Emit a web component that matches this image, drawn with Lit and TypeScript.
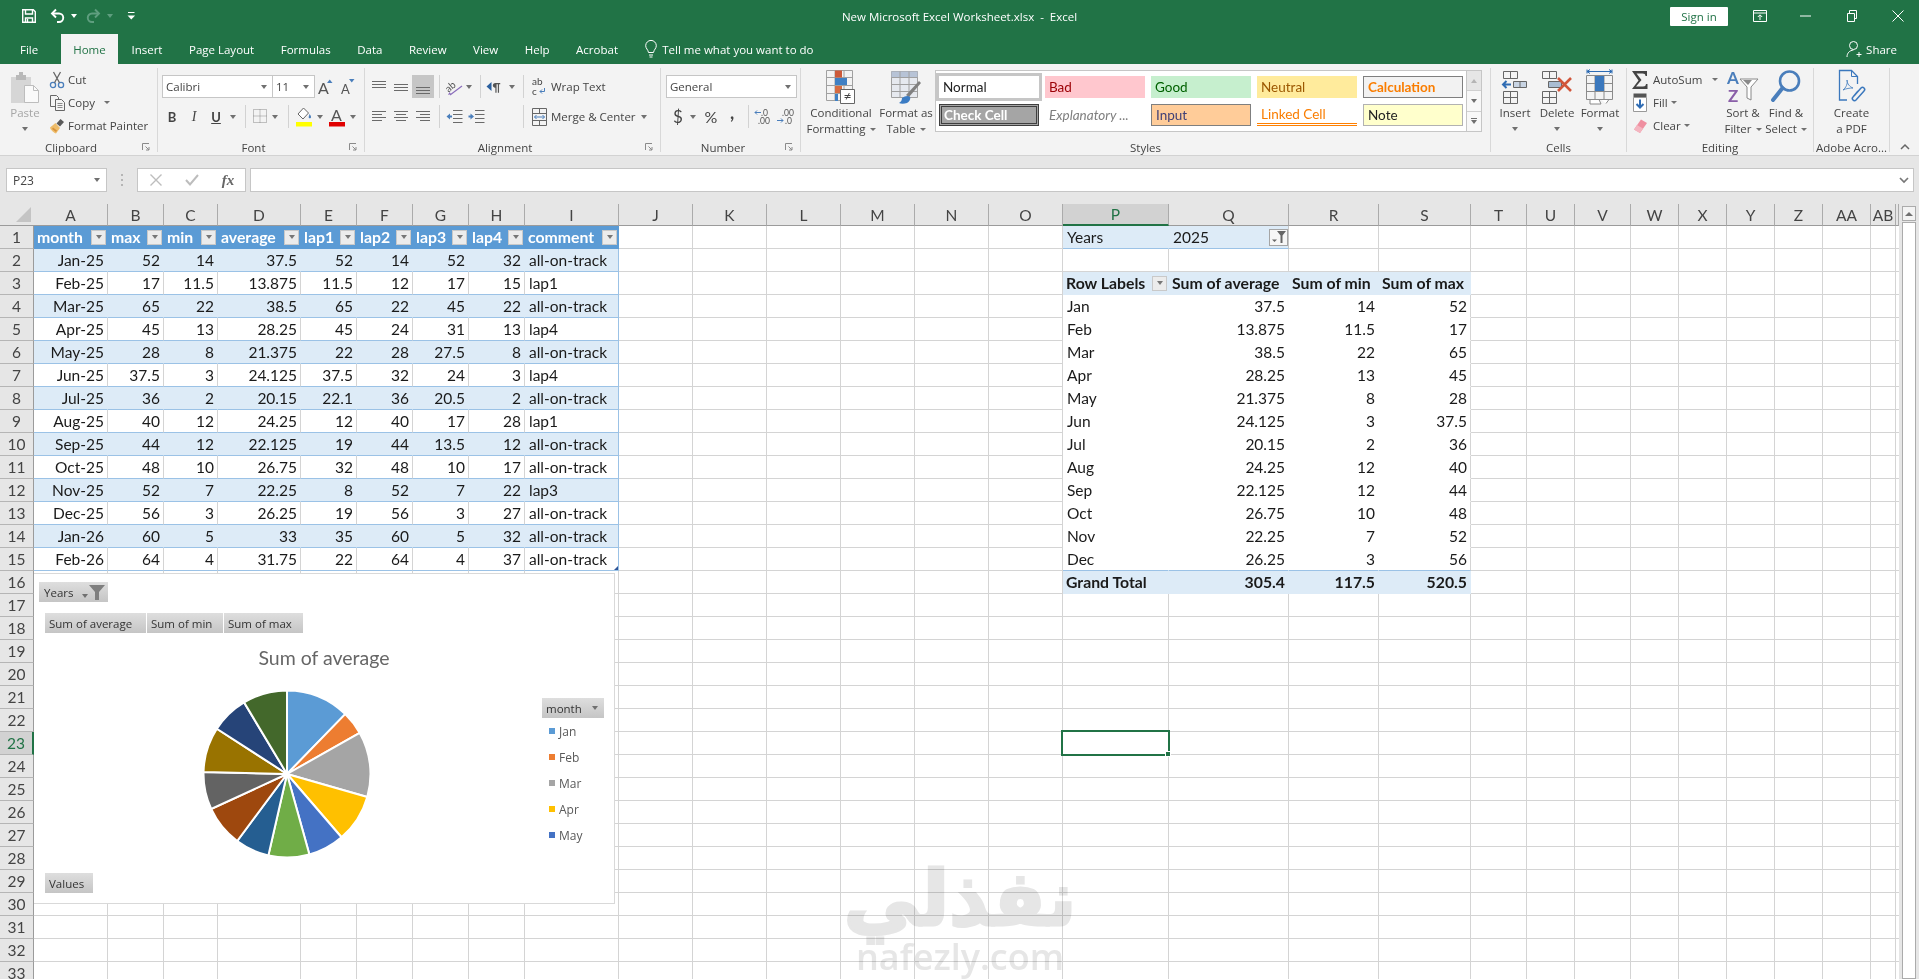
import { LitElement, html, css, svg } from 'lit';
import { customElement } from 'lit/decorators.js';

// column right edges in page pixels, the last one is the sliver after AB
const EDGES = [34, 108, 164, 218, 301, 357, 413, 469, 525, 619, 693, 767, 841, 915, 989, 1063, 1169, 1289, 1379, 1471, 1527, 1575, 1631, 1679, 1727, 1775, 1823, 1871, 1896, 1899];
const COLS = ['A', 'B', 'C', 'D', 'E', 'F', 'G', 'H', 'I', 'J', 'K', 'L', 'M', 'N', 'O', 'P', 'Q', 'R', 'S', 'T', 'U', 'V', 'W', 'X', 'Y', 'Z', 'AA', 'AB', ''];
const ROW_COUNT = 33;

const TABLE_HEAD = ['month', 'max', 'min', 'average', 'lap1', 'lap2', 'lap3', 'lap4', 'comment'];
const TABLE_ROWS = [
  ['Jan-25', '52', '14', '37.5', '52', '14', '52', '32', 'all-on-track'],
  ['Feb-25', '17', '11.5', '13.875', '11.5', '12', '17', '15', 'lap1'],
  ['Mar-25', '65', '22', '38.5', '65', '22', '45', '22', 'all-on-track'],
  ['Apr-25', '45', '13', '28.25', '45', '24', '31', '13', 'lap4'],
  ['May-25', '28', '8', '21.375', '22', '28', '27.5', '8', 'all-on-track'],
  ['Jun-25', '37.5', '3', '24.125', '37.5', '32', '24', '3', 'lap4'],
  ['Jul-25', '36', '2', '20.15', '22.1', '36', '20.5', '2', 'all-on-track'],
  ['Aug-25', '40', '12', '24.25', '12', '40', '17', '28', 'lap1'],
  ['Sep-25', '44', '12', '22.125', '19', '44', '13.5', '12', 'all-on-track'],
  ['Oct-25', '48', '10', '26.75', '32', '48', '10', '17', 'all-on-track'],
  ['Nov-25', '52', '7', '22.25', '8', '52', '7', '22', 'lap3'],
  ['Dec-25', '56', '3', '26.25', '19', '56', '3', '27', 'all-on-track'],
  ['Jan-26', '60', '5', '33', '35', '60', '5', '32', 'all-on-track'],
  ['Feb-26', '64', '4', '31.75', '22', '64', '4', '37', 'all-on-track'],
];
const PIVOT_ROWS = [
  ['Jan', '37.5', '14', '52'],
  ['Feb', '13.875', '11.5', '17'],
  ['Mar', '38.5', '22', '65'],
  ['Apr', '28.25', '13', '45'],
  ['May', '21.375', '8', '28'],
  ['Jun', '24.125', '3', '37.5'],
  ['Jul', '20.15', '2', '36'],
  ['Aug', '24.25', '12', '40'],
  ['Sep', '22.125', '12', '44'],
  ['Oct', '26.75', '10', '48'],
  ['Nov', '22.25', '7', '52'],
  ['Dec', '26.25', '3', '56'],
];
const PIE_COLORS = ['#5b9bd5', '#ed7d31', '#a5a5a5', '#ffc000', '#4472c4', '#70ad47', '#255e91', '#9e480e', '#636363', '#997300', '#264478', '#43682b'];

type Cell = { text?: string; cls: string; filter?: boolean; pivotFilter?: boolean };

function buildCells() {
  const cells = new Map<string, Cell>();
  TABLE_HEAD.forEach((text, c) => cells.set(`${c}:1`, { text, cls: 'th', filter: true }));
  TABLE_ROWS.forEach((row, r) => {
    row.forEach((text, c) => {
      const band = r % 2 === 0 ? 'band' : 'plain';
      const align = c === 8 ? '' : 'num';
      const last = c === 8 ? 'tbl-end' : '';
      const corner = c === 8 && r === TABLE_ROWS.length - 1 ? 'tbl-corner' : '';
      cells.set(`${c}:${r + 2}`, { text, cls: `tb ${band} ${align} ${last} ${corner}` });
    });
  });
  const P = 15;
  cells.set(`${P}:1`, { text: 'Years', cls: 'pv-page' });
  cells.set(`${P + 1}:1`, { text: '2025', cls: 'pv-page pv-page-val', pivotFilter: true });
  ['Row Labels', 'Sum of average', 'Sum of min', 'Sum of max'].forEach((text, i) => {
    cells.set(`${P + i}:3`, { text, cls: 'pv-head', filter: i === 0 });
  });
  PIVOT_ROWS.forEach((row, r) => {
    row.forEach((text, i) => {
      const lastRow = r === PIVOT_ROWS.length - 1 ? 'pv-lastrow' : '';
      cells.set(`${P + i}:${r + 4}`, { text, cls: `pv-body ${i ? 'num' : ''} ${i === 3 ? 'pv-end' : ''} ${lastRow}` });
    });
  });
  ['Grand Total', '305.4', '117.5', '520.5'].forEach((text, i) => {
    cells.set(`${P + i}:16`, { text, cls: `pv-head ${i ? 'num' : ''}` });
  });
  return cells;
}

function piePaths(cx: number, cy: number, r: number) {
  const values = PIVOT_ROWS.map((row) => Number(row[1]));
  const total = values.reduce((a, b) => a + b, 0);
  let angle = -Math.PI / 2;
  return values.map((v, i) => {
    const next = angle + (v / total) * Math.PI * 2;
    const x0 = cx + r * Math.cos(angle);
    const y0 = cy + r * Math.sin(angle);
    const x1 = cx + r * Math.cos(next);
    const y1 = cy + r * Math.sin(next);
    const large = next - angle > Math.PI ? 1 : 0;
    angle = next;
    return { d: `M${cx} ${cy}L${x0.toFixed(2)} ${y0.toFixed(2)}A${r} ${r} 0 ${large} 1 ${x1.toFixed(2)} ${y1.toFixed(2)}Z`, fill: PIE_COLORS[i] };
  });
}

const GREY = '#6a6a6a';
const BLUE = '#4a7ebb';

// horizontal text lines, used by the alignment buttons
function lines(rows: [number, number, number][], color = GREY) {
  return html`<svg width="16" height="18" viewBox="0 0 16 18">
    ${rows.map(([y, a, b]) => svg`<path d="M${a} ${y + 0.5}H${b}" stroke=${color} fill="none" />`)}
  </svg>`;
}

const ICONS = {
  save: html`<svg width="16" height="16" viewBox="0 0 16 16" fill="none" stroke="#fff" stroke-width="1.4"><path d="M1.7 1.7h10.6l2 2v10.6H1.7z" /><path d="M4.5 2v4h7V2" /><path d="M4.5 14.2V10h7v4.2" /><path d="M6.5 11v3" /></svg>`,
  undo: html`<svg width="16" height="16" viewBox="0 0 16 16" fill="none" stroke="#fff" stroke-width="1.9"><path d="M6 1.5 2 5.5l4 4" /><path d="M2.5 5.5H9a4 4 0 0 1 0 8.5H7" /></svg>`,
  redo: html`<svg width="16" height="16" viewBox="0 0 16 16" fill="none" stroke="#5f9e7f" stroke-width="1.9"><path d="m10 1.5 4 4-4 4" /><path d="M13.5 5.5H7a4 4 0 0 0 0 8.5h2" /></svg>`,
  custom: html`<svg width="9" height="10" viewBox="0 0 9 10"><path d="M1 1.5h6.5" stroke="#fff" /><path d="M.5 4.5h7.6L4.3 8.5z" fill="#fff" /></svg>`,
  signWin: html`<svg width="14" height="12" viewBox="0 0 14 12" fill="none" stroke="#fff"><path d="M.5.5h13v11H.5zM.5 3h13" /><path d="M7 10V5M4.8 7 7 4.8 9.2 7" /></svg>`,
  minimize: html`<svg width="12" height="2" viewBox="0 0 12 2"><path d="M0 1h11" stroke="#fff" /></svg>`,
  restore: html`<svg width="12" height="12" viewBox="0 0 12 12" fill="none" stroke="#fff"><path d="M1.5 3.5h7v8h-7zM3.5 3.5v-3h7v8h-2" /></svg>`,
  close: html`<svg width="12" height="12" viewBox="0 0 12 12" stroke="#fff"><path d="m.5.5 11 11M11.5.5l-11 11" /></svg>`,
  share: html`<svg width="16" height="18" viewBox="0 0 16 18" fill="none" stroke="#fff"><circle cx="7.5" cy="5.5" r="4" /><path d="M1 17c0-4 2.5-6.5 6.5-7" /><path d="M10.5 14.5h5M13 12v5" /></svg>`,
  bulb: html`<svg width="12" height="18" viewBox="0 0 12 18" fill="none" stroke="#fff"><path d="M3.5 12.5C3 9.5.7 8.5.7 5.7a5.3 5.3 0 0 1 10.6 0c0 2.8-2.3 3.8-2.8 6.8z" /><path d="M4 15h4M4.5 17h3" /></svg>`,

  paste: html`<svg width="30" height="32" viewBox="0 0 30 32"><path d="M1 6h20v26H1z" fill="#d6d6d6" /><path d="M6 4h10v5H6z" fill="#b9b9b9" /><path d="M9 1h4v4H9z" fill="#b9b9b9" /><path d="M14.5 14.5h9l5 5v12h-14z" fill="#fafafa" stroke="#bdbdbd" /><path d="M23.5 14.5v5h5" fill="none" stroke="#bdbdbd" /></svg>`,
  cut: html`<svg width="16" height="18" viewBox="0 0 16 18" fill="none"><circle cx="4" cy="14" r="2.6" stroke=${BLUE} stroke-width="1.3" /><circle cx="12" cy="14" r="2.6" stroke=${BLUE} stroke-width="1.3" /><path d="m5.5 11.8 6-10.8M10.5 11.8l-6-10.8" stroke="#666" stroke-width="1.3" /></svg>`,
  copy: html`<svg width="15" height="16" viewBox="0 0 15 16" fill="none" stroke="#666"><path d="M.5.5h6l2 2v9h-8z" /><path d="M5.5 4.5h6l3 3v8h-9z" fill="#f3f3f3" /><path d="M7.5 8.5h5M7.5 10.5h5M7.5 12.5h5" stroke="#8a8a8a" /></svg>`,
  painter: html`<svg width="16" height="16" viewBox="0 0 16 16"><path d="M1 9.5 6.5 5l4.5 5-4 5.5C5 15 1.5 12 1 9.5z" fill="#eebd6b" /><path d="m3 11 4 3 1-1.5-4-3z" fill="#d8923b" /><path d="m7.5 5.5 4-4.5 3.5 3-4 4.5z" fill="#5a5a5a" /></svg>`,
  grow: html`<svg width="16" height="18" viewBox="0 0 16 18"><text x="0" y="16" font-family="Lato" font-size="16" fill="#555">A</text><path d="M9 5h5.5l-2.75-3.5z" fill=${BLUE} /></svg>`,
  shrink: html`<svg width="16" height="18" viewBox="0 0 16 18"><text x="1" y="16" font-family="Lato" font-size="13" fill="#555">A</text><path d="M9 1h5.5l-2.75 3.5z" fill=${BLUE} /></svg>`,
  borders: html`<svg width="15" height="15" viewBox="0 0 15 15" stroke="#8a8a8a" stroke-dasharray="1 1" fill="none"><path d="M.5.5h13v13H.5zM7 .5v13M.5 7h13" /></svg>`,
  fill: html`<svg width="17" height="20" viewBox="0 0 17 20"><path d="M7.5 1 2 7l5 5 5.5-6z" fill="#fff" stroke="#666" /><path d="M13.5 7c1.5 2 2 3 1.2 4-1 .8-2.2 0-2-1z" fill=${BLUE} /><path d="M0 15h16v4.5H0z" fill="#ffff00" /></svg>`,
  fontColor: html`<svg width="17" height="20" viewBox="0 0 17 20"><text x="2" y="14" font-family="Lato" font-size="16" fill="#555">A</text><path d="M0 15h16v4.5H0z" fill="#e00000" /></svg>`,
  orient: html`<svg width="18" height="18" viewBox="0 0 18 18"><text x="1" y="12" transform="rotate(-40 6 10)" font-family="Lato" font-size="10" fill="#555">ab</text><path d="m5 17 12-9" stroke="#8a6dbb" stroke-width="1.2" /><path d="m3 17 3-1-1.5-2z" fill="#8a6dbb" /></svg>`,
  rtl: html`<svg width="18" height="14" viewBox="0 0 18 14"><path d="M5.5 2v9L.5 6.5z" fill="#2a5f9e" /><text x="6.5" y="11" font-family="Lato" font-weight="700" font-size="11" fill="#555">¶</text></svg>`,
  wrap: html`<svg width="14" height="20" viewBox="0 0 14 20"><text x="0" y="8" font-family="Lato" font-size="10" fill="#444">ab</text><text x="0" y="18" font-family="Lato" font-size="10" fill="#444">c</text><path d="M12.5 11v3.5H8M10 12.5l-2 2 2 2" stroke=${BLUE} fill="none" /></svg>`,
  merge: html`<svg width="15" height="18" viewBox="0 0 15 18" fill="none" stroke="#666"><path d="M.5.5h14v17H.5zM.5 5.5h14M.5 12.5h14M7.5.5v5M7.5 12.5v5" /><path d="M2.5 9h10M4.5 7l-2 2 2 2M10.5 7l2 2-2 2" stroke=${BLUE} /></svg>`,
  indentL: html`<svg width="17" height="16" viewBox="0 0 17 16"><path d="M7 1.5h9.5M7 5.5h9.5M7 9.5h9.5M7 13.5h9.5" stroke=${GREY} /><path d="M.5 7.5 4 4.5v2h2v2H4v2z" fill=${BLUE} /></svg>`,
  indentR: html`<svg width="17" height="16" viewBox="0 0 17 16"><path d="M7 1.5h9.5M7 5.5h9.5M7 9.5h9.5M7 13.5h9.5" stroke=${GREY} /><path d="M6 7.5 2.5 4.5v2H.5v2h2v2z" fill=${BLUE} /></svg>`,
  decUp: html`<svg width="18" height="17" viewBox="0 0 18 17"><text x="7" y="7.5" font-family="Lato" font-size="8.5" fill="#555">.0</text><text x="4" y="16" font-family="Lato" font-size="8.5" fill="#555">.00</text><path d="M1 4.5h6M3 2.5l-2 2 2 2" stroke=${BLUE} fill="none" /></svg>`,
  decDown: html`<svg width="18" height="17" viewBox="0 0 18 17"><text x="5" y="7.5" font-family="Lato" font-size="8.5" fill="#555">.00</text><text x="8" y="16" font-family="Lato" font-size="8.5" fill="#555">.0</text><path d="M0 12.5h6M4 10.5l2 2-2 2" stroke=${BLUE} fill="none" /></svg>`,

  condFormat: html`<svg width="30" height="34" viewBox="0 0 30 34" fill="none"><path d="M.5.5h26v30H.5zM.5 7.5h26M.5 15.5h26M.5 23.5h26M9 .5v30M18 .5v30" stroke="#a0a0a0" /><path d="M9 .5h7v7H9z" fill="#cc5a3a" /><path d="M9 8h12v7H9z" fill="#3f80c4" /><path d="M9 16h7v7H9z" fill="#d66b41" /><path d="M9 24h3v7H9z" fill="#3f80c4" /><path d="M14.5 19.5h14v14h-14z" fill="#fff" stroke="#666" /><text x="21.5" y="31" text-anchor="middle" font-family="Lato" font-size="14" fill="#444">≠</text></svg>`,
  fmtTable: html`<svg width="30" height="34" viewBox="0 0 30 34"><path d="M.5 1.5h26v26H.5z" fill="#e6e9ef" stroke="#a0a0a0" /><path d="M.5 1.5h26v6H.5z" fill="#b7c3d6" /><path d="M.5 7.5h26M.5 14.5h26M.5 21.5h26M9 1.5v26M18 1.5v26" stroke="#a0a0a0" fill="none" /><path d="m15 25 13-14 2 2-12 14z" fill="#808080" /><path d="M11 28c3-2 6-3 8-1 1 2-1 5-3 6-3 1-6 1-8 0 2-1 3-3 3-5z" fill="#3b7cc4" /></svg>`,
  insert: html`<svg width="28" height="34" viewBox="0 0 28 34" fill="none" stroke="#666"><path d="M2.5 1.5h14v7h-14zM9.5 1.5v7M2.5 21.5h14v12h-14zM2.5 27.5h14M9.5 21.5v12" /><path d="M12.5 11.5h13v6h-13z" fill="#c8d4e3" /><path d="M19 11.5v6" /><path d="M10 14.5H2M5.5 11 2 14.5 5.5 18" stroke="#2f6cb3" stroke-width="2" /></svg>`,
  del: html`<svg width="32" height="34" viewBox="0 0 32 34" fill="none" stroke="#666"><path d="M1.5 1.5h14v7h-14zM8.5 1.5v7M1.5 21.5h14v12h-14zM1.5 27.5h14M8.5 21.5v12" /><path d="M7.5 11.5h13v6h-13z" fill="#a9bdd3" /><path d="m17 8 13 13M30 8 17 21" stroke="#d1553a" stroke-width="2.6" /></svg>`,
  format: html`<svg width="30" height="36" viewBox="0 0 30 36" fill="none" stroke="#8a8a8a"><path d="M1.5 6.5h26v24h-26zM1.5 14.5h26M1.5 22.5h26M10 6.5v24M19 6.5v24" /><path d="M10 7h9v15h-9z" fill="#3b78bd" stroke="none" /><path d="M2 2.5h25M2 .5v4M27 .5v4M5 .5 2 2.5 5 4.5M24 .5l3 2-3 2" stroke="#2f6cb3" /><path d="M5 30.5h9l2 4.5H5zM16 30.5h8l-3 4" fill="#fff" /></svg>`,
  sigma: html`<svg width="16" height="18" viewBox="0 0 16 18"><path d="M0 0h15v5h-1.5c-.2-1.8-1-2.5-3-2.5H4.5l5 6.500-5.500 6.500h7c2 0 2.800-.8 3-2.500h1.500v5H0l6.500-8.500z" fill="#444" /></svg>`,
  fillDown: html`<svg width="14" height="19" viewBox="0 0 14 19"><path d="M.5.5h13v4H.5z" fill="#555" /><path d="M.5 4.5h13v14H.5z" fill="#fff" stroke="#999" /><path d="M7 6.5v8M3.5 11 7 14.5l3.5-3.5" stroke="#2f6cb3" stroke-width="2" fill="none" /></svg>`,
  eraser: html`<svg width="15" height="16" viewBox="0 0 15 16"><path d="m8 1.5 6 3.5-7 10-6-3.5z" fill="#ef8fa0" /><path d="M1 11.5 4 7l6 3.5L7 15z" fill="#f4b5c0" /></svg>`,
  sort: html`<svg width="32" height="34" viewBox="0 0 32 34"><text x="0" y="14" font-family="Lato" font-weight="700" font-size="17" fill="#4a7ebb">A</text><text x="1" y="32" font-family="Lato" font-weight="700" font-size="17" fill="#8a5fa8">Z</text><path d="M13 9h18l-7 8v13l-4-2V17z" fill="#fff" stroke="#888" /><path d="M16 10h9l-4 5z" fill="#8a8a8a" /></svg>`,
  find: html`<svg width="30" height="34" viewBox="0 0 30 34" fill="none"><circle cx="18.5" cy="11" r="9.5" stroke=${BLUE} stroke-width="2.6" /><path d="M11.5 18 2 30" stroke=${BLUE} stroke-width="4" stroke-linecap="round" /></svg>`,
  pdf: html`<svg width="28" height="36" viewBox="0 0 28 36" fill="none" stroke="#3b78bd"><path d="M9 31H1.5V1.5h12l6 6V15" stroke-width="1.3" /><path d="M13.5 1.5v6h6" /><path d="M5 21c3-2 5-7 4-10 0 4 3 7 6 8-3 0-7 .5-10 2z" stroke-width=".8" /><path d="m16 27 7-8c2-2 5 1 3 3l-8 9c-2 2-5-1-3-3l5-6" stroke-width="1.5" /></svg>`,
  launcher: html`<svg width="8" height="8" viewBox="0 0 8 8" fill="none" stroke="#8a8a8a"><path d="M.5 7V.5H7" /><path d="M3.5 3.5 7 7M7 4v3H4" /></svg>`,
  chevUp: html`<svg width="10" height="7" viewBox="0 0 10 7" fill="none" stroke="#666" stroke-width="1.5"><path d="m1 6 4-4 4 4" /></svg>`,
  chevDown: html`<svg width="10" height="7" viewBox="0 0 10 7" fill="none" stroke="#777" stroke-width="1.7"><path d="m1 1 4 4 4-4" /></svg>`,
  cross: html`<svg width="12" height="12" viewBox="0 0 12 12" stroke="#bdbdbd" stroke-width="1.4"><path d="m.5.5 11 11M11.5.5l-11 11" /></svg>`,
  check: html`<svg width="14" height="12" viewBox="0 0 14 12" fill="none" stroke="#bdbdbd" stroke-width="2"><path d="m1 6 4 4.5L13 1" /></svg>`,
  funnel: html`<svg width="16" height="15" viewBox="0 0 16 15"><path d="M0 0h16l-6 7v8H6V7z" fill="#7f7f7f" /></svg>`,
  funnelSmall: html`<svg width="16" height="14" viewBox="0 0 16 14"><path d="M6 1h9L11.5 5.5V13h-2V5.5z" fill="#666" /><path d="M1 9.5h5l-2.5 2.500z" fill="#666" /></svg>`,
};

const caret = html`<i class="caret"></i>`;
const vsep = html`<i class="vsep"></i>`;

function bigButton(icon: unknown, line1: string, line2: string, width: string) {
  return html`<div class="big ${width}">
    <div class="big-icon">${icon}</div>
    <div class="big-text">${line1}</div>
    <div class="big-text">${line2}<i class="caret caret-sm"></i></div>
  </div>`;
}

@customElement('app-root')
export class AppRoot extends LitElement {
  static styles = css`
    :host {
      display: block;
      width: 1919px;
      height: 979px;
      overflow: hidden;
      background: #e6e6e6;
      font-family: 'Open Sans', 'Noto Sans', sans-serif;
      font-size: 11.5px;
      color: #444;
    }
    i { display: block; font-style: normal; }
    svg { overflow: visible; display: block; }
    .caret {
      width: 0;
      height: 0;
      border-left: 3.5px solid transparent;
      border-right: 3.5px solid transparent;
      border-top: 4px solid #707070;
    }
    .caret-sm { display: inline-block; margin-left: 4px; border-left-width: 3px; border-right-width: 3px; border-top-width: 3px; }
    .vsep { width: 1px; height: 23px; background: #d2d2d2; flex: none; }

    /* title bar and tabs */
    .title { height: 34px; box-sizing: border-box; padding-bottom: 2px; background: #217346; color: #fff; display: grid; grid-template-columns: 1fr auto 1fr; align-items: center; }
    .qat { display: flex; align-items: center; padding-left: 21px; }
    .qat .undo { margin-left: 13px; }
    .qat .c1 { margin: 0 0 0 5px; border-top-color: #fff; }
    .qat .redo { margin-left: 8px; }
    .qat .c2 { margin: 0 0 0 6px; border-top-color: #5f9e7f; }
    .qat .cust { margin-left: 14px; }
    .doc-name { text-align: center; font-size: 11.5px; }
    .win { display: flex; align-items: center; justify-content: flex-end; }
    .signin { width: 58px; height: 19px; background: #fff; color: #217346; display: flex; align-items: center; justify-content: center; border-radius: 1px; font-size: 11.5px; margin-right: 9px; }
    .win-btn { width: 46px; display: flex; justify-content: center; }
    .win .win-btn:last-child { margin-right: -2px; }

    .tabs { height: 30px; background: #217346; color: #fff; display: flex; align-items: stretch; padding-left: 20px; font-size: 11.5px; }
    .tab { padding: 0 13.25px; display: flex; align-items: center; }
    .tab.file { padding: 0 23px 0 0; }
    .tab.on { background: #f3f3f3; color: #217346; padding: 0 12px; margin-right: 0.5px; }
    .tell { display: flex; align-items: center; gap: 5px; margin-left: 14px; }
    .share { margin-left: auto; display: flex; align-items: center; gap: 4px; padding-right: 22px; }

    /* ribbon */
    .ribbon { height: 92px; box-sizing: border-box; background: #f3f3f3; border-bottom: 1px solid #d2d2d2; padding-top: 4px; display: flex; color: #444; }
    .group { height: 84px; box-sizing: border-box; border-right: 1px solid #d8d8d8; display: flex; flex-direction: column; flex: none; }
    .body { flex: 1; min-height: 0; display: flex; }
    .label { height: 16px; margin-bottom: -3px; margin-top: -5px; display: flex; align-items: center; flex: none; }
    .label span { flex: 1; text-align: center; }
    .label .launch { width: 15px; flex: none; }
    .g-clip { width: 158px; }
    .g-font { width: 207px; }
    .g-align { width: 296px; }
    .g-num { width: 140px; }
    .g-styles { width: 690px; }
    .g-cells { width: 136px; }
    .g-edit { width: 187px; }
    .g-pdf { width: 76px; }
    .g-collapse { flex: 1; display: flex; align-items: flex-end; justify-content: center; padding-bottom: 2px; box-sizing: border-box; height: 84px; }

    .stack { display: flex; flex-direction: column; }
    .two { padding-top: 7px; gap: 7px; }
    .line { display: flex; align-items: center; height: 23px; }
    .s { display: flex; align-items: center; justify-content: center; height: 23px; flex: none; }
    .w3 { width: 3px; } .w4 { width: 4px; } .w5 { width: 5px; } .w6 { width: 6px; } .w7 { width: 7px; } .w8 { width: 8px; } .w9 { width: 9px; } .w12 { width: 12px; }
    .w14 { width: 14px; } .w16 { width: 16px; } .w20 { width: 20px; } .w22 { width: 22px; } .w23 { width: 23px; } .w36 { width: 36px; }
    .hl { background: #c6c6c6; }

    .big { display: flex; flex-direction: column; align-items: center; flex: none; }
    .big-icon { height: 37px; display: flex; align-items: center; justify-content: center; }
    .big-text { height: 16px; line-height: 16px; white-space: nowrap; display: flex; align-items: center; justify-content: center; }
    .bw42 { width: 42px; } .bw44 { width: 44px; } .bw50 { width: 50px; } .bw80 { width: 80px; } .bw75 { width: 75px; }
    .dim { color: #a6a6a6; }
    .dim .caret { margin: 0; }

    .small-rows { display: flex; flex-direction: column; }
    .small-row { height: 23px; display: flex; align-items: center; white-space: nowrap; }
    .small-row .ico { width: 18px; display: flex; justify-content: center; flex: none; margin-left: -2px; margin-right: 2px; }
    .small-row .caret { margin-left: 9px; border-left-width: 3px; border-right-width: 3px; border-top-width: 3px; }
    .edit-col { width: 95px; }
    .edit-col .ico { margin-left: 4px; margin-right: 4px; }
    .edit-col .small-row .caret { margin-left: 3px; }
    .edit-col .small-row .caret.far { margin-left: 10px; }

    .box { height: 23px; box-sizing: border-box; background: #fff; border: 1px solid #c6c6c6; display: flex; align-items: center; justify-content: space-between; padding: 0 5px 0 3px; flex: none; }
    .font-name { width: 111px; margin-left: 4px; }
    .font-size { width: 43px; margin-left: -1px; }
    .num-fmt { width: 131px; margin-left: 5px; }
    .bi { font-family: Lato, sans-serif; font-size: 13px; font-weight: 700; }
    .bi.it { font-style: italic; font-weight: 400; font-family: 'Liberation Serif', serif; font-size: 14px; }
    .bi.un { text-decoration: underline; }
    .dollar { font-size: 17px; font-family: Lato, sans-serif; }
    .percent { font-size: 16px; font-family: Lato, sans-serif; }
    .comma { font-size: 18px; font-weight: 700; font-family: Lato, sans-serif; padding-bottom: 9px; box-sizing: border-box; }
    .text-after { margin-left: 5px; white-space: nowrap; }
    .text-merge { margin-left: 4px; white-space: nowrap; }

    .gallery { margin: 2px 0 0 4px; width: 547px; height: 62px; box-sizing: border-box; border: 1px solid #c6c6c6; background: #fff; display: flex; }
    .styles-grid { flex: 1; display: grid; grid-template-columns: repeat(5, 100px); grid-auto-rows: 22px; gap: 6px; padding: 5px 0 0 3px; }
    .st { box-sizing: border-box; display: flex; align-items: center; padding: 0 4px; font-family: Lato, sans-serif; font-size: 13.5px; color: #222; white-space: nowrap; }
    .st-normal { outline: 3px solid #c6c6c6; outline-offset: 0; }
    .st-bad { background: #ffc7ce; color: #9c0006; }
    .st-good { background: #c6efce; color: #006100; }
    .st-neutral { background: #ffeb9c; color: #9c5700; }
    .st-calc { background: #f2f2f2; border: 1px solid #7f7f7f; color: #fa7d00; font-weight: 700; }
    .st-check { background: #a5a5a5; border: 3px double #3f3f3f; color: #fff; font-weight: 700; padding: 0 2px; }
    .st-expl { color: #7f7f7f; font-style: italic; }
    .st-input { background: #ffcc99; border: 1px solid #7f7f7f; color: #3f3f76; }
    .st-link { color: #fa7d00; border-bottom: 3px double #ff8001; }
    .st-note { background: #ffffcc; border: 1px solid #b2b2b2; }
    .gal-bar { width: 14px; border-left: 1px solid #c6c6c6; display: flex; flex-direction: column; flex: none; }
    .gal-bar div { flex: 1; display: flex; align-items: center; justify-content: center; border-bottom: 1px solid #d0d0d0; background: #f8f8f8; }
    .gal-bar div:first-child { background: #e6e6e6; }
    .gal-bar div:last-child { border-bottom: 0; flex-direction: column; gap: 1px; }
    .gal-bar .up { width: 0; height: 0; border-left: 3px solid transparent; border-right: 3px solid transparent; border-bottom: 4px solid #b5b5b5; }
    .gal-bar .bar { width: 6px; height: 1px; background: #707070; }

    /* formula bar */
    .fbar { height: 48px; box-sizing: border-box; padding: 12px 5px 12px 6px; display: flex; background: #e6e6e6; }
    .fbox { box-sizing: border-box; height: 24px; background: #fff; border: 1px solid #c6c6c6; display: flex; align-items: center; flex: none; }
    .name { width: 101px; padding: 0 6px; justify-content: space-between; font-size: 12px; }
    .dots { width: 30px; display: flex; flex-direction: column; align-items: center; justify-content: center; gap: 3px; flex: none; }
    .dots i { width: 2px; height: 2px; background: #b5b5b5; }
    .fx { width: 109px; display: grid; grid-template-columns: repeat(3, 36px); justify-items: center; align-items: center; }
    .fx em { font-family: 'Liberation Serif', serif; font-size: 15px; font-weight: 700; color: #666; }
    .input { flex: 1; margin-left: 4px; justify-content: flex-end; padding-right: 4px; }

    /* sheet */
    .workspace { display: flex; height: 775px; overflow: hidden; }
    .sheet { position: relative; width: 1899px; flex: none; height: 775px; overflow: hidden; font-family: Lato, sans-serif; font-size: 15.5px; color: #1a1a1a; background: #fff; }
    .grid { display: grid; grid-template-rows: 22px; grid-auto-rows: 23px; }
    .col-head { background: #e6e6e6; border-right: 1px solid #ababab; border-bottom: 1px solid #9b9b9b; display: flex; align-items: center; justify-content: center; color: #444; box-sizing: border-box; }
    .col-head.on { background: #d2d2d2; color: #217346; border-bottom: 2px solid #217346; }
    .corner { background: #e6e6e6; border-bottom: 1px solid #9b9b9b; box-sizing: border-box; display: flex; align-items: flex-end; justify-content: flex-end; padding: 0 3px 3px 0; }
    .corner i { width: 0; height: 0; border-left: 15px solid transparent; border-bottom: 15px solid #c4c4c4; }
    .row-head { background: #e6e6e6; border-right: 1px solid #9b9b9b; border-bottom: 1px solid #b5b5b5; display: flex; align-items: center; justify-content: center; color: #444; box-sizing: border-box; }
    .row-head.on { background: #d2d2d2; color: #217346; border-right: 2px solid #217346; }
    .cell { box-sizing: border-box; border-right: 1px solid #d4d4d4; border-bottom: 1px solid #d4d4d4; display: flex; align-items: center; padding: 0 3px 0 4px; white-space: nowrap; min-width: 0; position: relative; }
    .num { justify-content: flex-end; }
    .th { background: #5b9bd5; color: #fff; font-weight: 700; font-size: 15.8px; border-color: #5b9bd5; justify-content: space-between; padding: 0 1px 0 3px; }
    .th span, .pv-head span { margin-top: -2px; }
    .tb { border-bottom-color: #9bc2e6; }
    .band { background: #ddebf7; border-right-color: #ddebf7; }
    .tbl-end { border-right-color: #9bc2e6; }
    .tbl-corner::after { content: ''; position: absolute; right: 0; bottom: 0; width: 0; height: 0; border-left: 4px solid transparent; border-bottom: 4px solid #2f5597; }
    .pv-page { background: #ddebf7; border-right-color: #ddebf7; border-bottom-color: #9bc2e6; }
    .pv-page-val { justify-content: space-between; padding-right: 0; border-right-color: #c6c6c6; }
    .pv-head { background: #ddebf7; font-weight: 700; font-size: 15.8px; border-right-color: #ddebf7; border-bottom-color: #ddebf7; justify-content: space-between; padding: 0 1px 0 3px; }
    .pv-head.num { justify-content: flex-end; padding: 0 3px 0 0; }
    .pv-body { border-bottom-color: #fff; border-right-color: #fff; }
    .pv-end { border-right-color: #d4d4d4; }
    .pv-lastrow { border-bottom-color: #9bc2e6; }
    .fbtn { width: 15px; height: 15px; box-sizing: border-box; flex: none; background: #ececec; border: 1px solid #c9c9c9; display: flex; align-items: center; justify-content: center; }
    .fbtn .caret { border-left-width: 3px; border-right-width: 3px; border-top-width: 4px; border-top-color: #777; }
    .pv-filter { width: 17px; height: 15px; background: #f6f6f6; border: 1px solid #a5a5a5; display: flex; align-items: center; justify-content: center; flex: none; }

    .selection { position: absolute; left: 1061px; top: 526px; width: 109px; height: 26px; box-sizing: border-box; border: 2px solid #217346; }
    .selection i { position: absolute; right: -3px; bottom: -3px; width: 6px; height: 6px; background: #217346; border: 1px solid #fff; box-sizing: border-box; }

    /* pivot chart sitting over the cells */
    .chart { position: absolute; left: 34px; top: 369px; width: 581px; height: 331px; box-sizing: border-box; background: #fff; border: 1px solid #d9d9d9; border-left: 0; display: flex; flex-direction: column; font-family: 'Open Sans', sans-serif; font-size: 11.5px; color: #333; }
    .pbtn { height: 20px; box-sizing: border-box; background: linear-gradient(#dedede, #c5c5c5); display: flex; align-items: center; padding: 0 3px; flex: none; white-space: nowrap; }
    .years { width: 69px; margin: 8px 0 0 5px; padding-left: 5px; justify-content: space-between; }
    .years .caret { margin-left: auto; margin-right: 1px; align-self: flex-end; margin-bottom: 4px; }
    .fields { display: flex; margin: 11px 0 0 11px; gap: 1px; }
    .f1 { width: 101px; } .f2 { width: 76px; } .f3 { width: 79px; }
    .f1, .f2, .f3 { padding-left: 4px; }
    .chart-title { font-family: Lato, sans-serif; font-size: 19.5px; color: #666; text-align: center; margin-top: 13px; line-height: 24px; }
    .plot { display: flex; align-items: flex-start; margin-top: 19px; }
    .pie { margin-left: 168px; flex: none; }
    .legend { margin: 9px 10px 0 auto; width: 62px; }
    .month-btn { justify-content: space-between; padding: 0 6px 0 4px; }
    .legend-item { height: 26px; display: flex; align-items: center; gap: 4px; padding-left: 7px; color: #595959; font-size: 12px; }
    .legend-item:first-of-type { margin-top: 1px; }
    .legend-item i { width: 6px; height: 6px; }
    .values { width: 48px; margin: auto 0 10px 11px; padding-left: 4px; }

    .watermark { position: absolute; left: 853px; top: 660px; width: 214px; display: flex; flex-direction: column; align-items: center; pointer-events: none; color: #e6e6e6; mix-blend-mode: multiply; }
    .wm-ar { font-family: 'DejaVu Sans', sans-serif; font-weight: 700; font-size: 76px; line-height: 70px; direction: rtl; -webkit-text-stroke: 3px #e6e6e6; }
    .wm-en { font-family: 'Open Sans', sans-serif; font-weight: 600; font-size: 36px; line-height: 40px; margin-top: 3px; }

    .vscroll { width: 20px; flex: none; padding: 2px 3px 0; box-sizing: border-box; display: flex; flex-direction: column; gap: 1px; }
    .sb-up { height: 15px; flex: none; background: #f3f3f3; border: 1px solid #ababab; box-sizing: border-box; display: flex; align-items: center; justify-content: center; }
    .sb-up i { width: 0; height: 0; border-left: 4px solid transparent; border-right: 4px solid transparent; border-bottom: 4px solid #707070; }
    .sb-thumb { flex: 1; background: #fff; border: 1px solid #ababab; box-sizing: border-box; }
  `;

  private renderTitle() {
    return html`<div class="title">
      <div class="qat">
        ${ICONS.save}
        <span class="undo">${ICONS.undo}</span><i class="caret c1"></i>
        <span class="redo">${ICONS.redo}</span><i class="caret c2"></i>
        <span class="cust">${ICONS.custom}</span>
      </div>
      <div class="doc-name">New Microsoft Excel Worksheet.xlsx&nbsp; - &nbsp;Excel</div>
      <div class="win">
        <div class="signin">Sign in</div>
        <div class="win-btn">${ICONS.signWin}</div>
        <div class="win-btn">${ICONS.minimize}</div>
        <div class="win-btn">${ICONS.restore}</div>
        <div class="win-btn">${ICONS.close}</div>
      </div>
    </div>`;
  }

  private renderTabs() {
    const names = ['File', 'Home', 'Insert', 'Page Layout', 'Formulas', 'Data', 'Review', 'View', 'Help', 'Acrobat'];
    return html`<div class="tabs">
      ${names.map((n) => html`<div class="tab ${n === 'Home' ? 'on' : ''} ${n === 'File' ? 'file' : ''}">${n}</div>`)}
      <div class="tell">${ICONS.bulb}<span>Tell me what you want to do</span></div>
      <div class="share">${ICONS.share}<span>Share</span></div>
    </div>`;
  }

  private groupLabel(text: string, launcher = false) {
    return html`<div class="label"><span>${text}</span>${launcher ? html`<div class="launch">${ICONS.launcher}</div>` : ''}</div>`;
  }

  private renderClipboard() {
    return html`<div class="group g-clip">
      <div class="body">
        <div class="big bw50 dim">
          <div class="big-icon">${ICONS.paste}</div>
          <div class="big-text">Paste</div>
          <div class="big-text">${caret}</div>
        </div>
        <div class="small-rows">
          <div class="small-row"><span class="ico">${ICONS.cut}</span>Cut</div>
          <div class="small-row"><span class="ico">${ICONS.copy}</span>Copy${caret}</div>
          <div class="small-row"><span class="ico">${ICONS.painter}</span>Format Painter</div>
        </div>
      </div>
      ${this.groupLabel('Clipboard', true)}
    </div>`;
  }

  private renderFont() {
    return html`<div class="group g-font">
      <div class="body stack two">
        <div class="line">
          <div class="box font-name">Calibri${caret}</div>
          <div class="box font-size">11${caret}</div>
          <div class="s w22">${ICONS.grow}</div>
          <div class="s w22">${ICONS.shrink}</div>
        </div>
        <div class="line">
          <div class="s w3"></div>
          <div class="s w22 bi">B</div>
          <div class="s w22 bi it">I</div>
          <div class="s w22 bi un">U</div>
          <div class="s w12">${caret}</div>
          <div class="s w6"></div>${vsep}
          <div class="s w3"></div>
          <div class="s w22">${ICONS.borders}</div>
          <div class="s w8">${caret}</div>
          <div class="s w9"></div>${vsep}
          <div class="s w4"></div>
          <div class="s w23">${ICONS.fill}</div>
          <div class="s w8">${caret}</div>
          <div class="s w3"></div>
          <div class="s w20">${ICONS.fontColor}</div>
          <div class="s w12">${caret}</div>
        </div>
      </div>
      ${this.groupLabel('Font', true)}
    </div>`;
  }

  private renderAlignment() {
    return html`<div class="group g-align">
      <div class="body stack two">
        <div class="line">
          <div class="s w3"></div>
          <div class="s w22">${lines([[3, 1, 15], [6, 1, 15], [9, 1, 15]])}</div>
          <div class="s w22">${lines([[6, 1, 15], [9, 1, 15], [12, 1, 15]])}</div>
          <div class="s w22 hl">${lines([[9, 1, 15], [12, 1, 15], [15, 1, 15]])}</div>
          <div class="s w5"></div>${vsep}
          <div class="s w3"></div>
          <div class="s w22">${ICONS.orient}</div>
          <div class="s w8">${caret}</div>
          <div class="s w7"></div>${vsep}
          <div class="s w3"></div>
          <div class="s w22">${ICONS.rtl}</div>
          <div class="s w12">${caret}</div>
          <div class="s w5"></div>${vsep}
          <div class="s w8"></div>
          <div class="s w14">${ICONS.wrap}</div>
          <span class="text-after">Wrap Text</span>
        </div>
        <div class="line">
          <div class="s w3"></div>
          <div class="s w22">${lines([[3, 1, 15], [6, 1, 11], [9, 1, 15], [12, 1, 11]])}</div>
          <div class="s w22">${lines([[3, 1, 15], [6, 3, 13], [9, 1, 15], [12, 3, 13]])}</div>
          <div class="s w22">${lines([[3, 1, 15], [6, 5, 15], [9, 1, 15], [12, 5, 15]])}</div>
          <div class="s w5"></div>${vsep}
          <div class="s w3"></div>
          <div class="s w22">${ICONS.indentL}</div>
          <div class="s w22">${ICONS.indentR}</div>
          <div class="s w36"></div>${vsep}
          <div class="s w7"></div>
          <div class="s w16">${ICONS.merge}</div>
          <span class="text-merge">Merge &amp; Center</span>
          <div class="s w16">${caret}</div>
        </div>
      </div>
      ${this.groupLabel('Alignment', true)}
    </div>`;
  }

  private renderNumber() {
    return html`<div class="group g-num">
      <div class="body stack two">
        <div class="line"><div class="box num-fmt">General${caret}</div></div>
        <div class="line">
          <div class="s w6"></div>
          <div class="s w22 dollar">$</div>
          <div class="s w8">${caret}</div>
          <div class="s w3"></div>
          <div class="s w22 percent">%</div>
          <div class="s w20 comma">,</div>
          <div class="s w6"></div>${vsep}
          <div class="s w3"></div>
          <div class="s w22">${ICONS.decUp}</div>
          <div class="s w23">${ICONS.decDown}</div>
        </div>
      </div>
      ${this.groupLabel('Number', true)}
    </div>`;
  }

  private renderStyles() {
    return html`<div class="group g-styles">
      <div class="body">
        ${bigButton(ICONS.condFormat, 'Conditional', 'Formatting', 'bw80')}
        ${bigButton(ICONS.fmtTable, 'Format as', 'Table', 'bw50')}
        <div class="gallery">
          <div class="styles-grid">
            <div class="st st-normal">Normal</div>
            <div class="st st-bad">Bad</div>
            <div class="st st-good">Good</div>
            <div class="st st-neutral">Neutral</div>
            <div class="st st-calc">Calculation</div>
            <div class="st st-check">Check Cell</div>
            <div class="st st-expl">Explanatory ...</div>
            <div class="st st-input">Input</div>
            <div class="st st-link">Linked Cell</div>
            <div class="st st-note">Note</div>
          </div>
          <div class="gal-bar">
            <div><i class="up"></i></div>
            <div>${caret}</div>
            <div><i class="bar"></i>${caret}</div>
          </div>
        </div>
      </div>
      ${this.groupLabel('Styles')}
    </div>`;
  }

  private renderCells() {
    const button = (icon: unknown, name: string, width: string) => html`<div class="big ${width}">
      <div class="big-icon">${icon}</div>
      <div class="big-text">${name}</div>
      <div class="big-text">${caret}</div>
    </div>`;
    return html`<div class="group g-cells">
      <div class="body">
        <div class="s w3"></div>
        ${button(ICONS.insert, 'Insert', 'bw42')}
        ${button(ICONS.del, 'Delete', 'bw42')}
        ${button(ICONS.format, 'Format', 'bw44')}
      </div>
      ${this.groupLabel('Cells')}
    </div>`;
  }

  private renderEditing() {
    return html`<div class="group g-edit">
      <div class="body">
        <div class="small-rows edit-col">
          <div class="small-row"><span class="ico">${ICONS.sigma}</span>AutoSum<i class="caret far"></i></div>
          <div class="small-row"><span class="ico">${ICONS.fillDown}</span>Fill${caret}</div>
          <div class="small-row"><span class="ico">${ICONS.eraser}</span>Clear${caret}</div>
        </div>
        ${bigButton(ICONS.sort, 'Sort &', 'Filter', 'bw42')}
        ${bigButton(ICONS.find, 'Find &', 'Select', 'bw44')}
      </div>
      ${this.groupLabel('Editing')}
    </div>`;
  }

  private renderPdf() {
    return html`<div class="group g-pdf">
      <div class="body">
        <div class="big bw75">
          <div class="big-icon">${ICONS.pdf}</div>
          <div class="big-text">Create</div>
          <div class="big-text">a PDF</div>
        </div>
      </div>
      ${this.groupLabel('Adobe Acro...')}
    </div>`;
  }

  private renderFormulaBar() {
    return html`<div class="fbar">
      <div class="fbox name">P23${caret}</div>
      <div class="dots"><i></i><i></i><i></i></div>
      <div class="fbox fx">${ICONS.cross}${ICONS.check}<em>fx</em></div>
      <div class="fbox input">${ICONS.chevDown}</div>
    </div>`;
  }

  private renderGrid() {
    const cells = buildCells();
    const widths = EDGES.map((edge, i) => (i === 0 ? edge : edge - EDGES[i - 1]));
    const rows = Array.from({ length: ROW_COUNT }, (_, i) => i + 1);
    return html`<div class="grid" style="grid-template-columns:${widths.map((w) => `${w}px`).join(' ')}">
      <div class="corner"><i></i></div>
      ${COLS.map((c) => html`<div class="col-head ${c === 'P' ? 'on' : ''}">${c}</div>`)}
      ${rows.map((r) => html`
        <div class="row-head ${r === 23 ? 'on' : ''}">${r}</div>
        ${COLS.map((_, c) => {
          const cell = cells.get(`${c}:${r}`);
          if (!cell) return html`<div class="cell"></div>`;
          return html`<div class="cell ${cell.cls}">
            <span>${cell.text}</span>
            ${cell.filter ? html`<div class="fbtn">${caret}</div>` : ''}
            ${cell.pivotFilter ? html`<div class="pv-filter">${ICONS.funnelSmall}</div>` : ''}
          </div>`;
        })}
      `)}
    </div>`;
  }

  private renderChart() {
    const slices = piePaths(85, 85, 83.5);
    return html`<div class="chart">
      <div class="pbtn years">Years<i class="caret"></i>${ICONS.funnel}</div>
      <div class="fields">
        <div class="pbtn f1">Sum of average</div>
        <div class="pbtn f2">Sum of min</div>
        <div class="pbtn f3">Sum of max</div>
      </div>
      <div class="chart-title">Sum of average</div>
      <div class="plot">
        <svg class="pie" width="170" height="170" viewBox="0 0 170 170">
          ${slices.map((s) => svg`<path d=${s.d} fill=${s.fill} stroke="#fff" stroke-width="2" />`)}
        </svg>
        <div class="legend">
          <div class="pbtn month-btn">month${caret}</div>
          ${['Jan', 'Feb', 'Mar', 'Apr', 'May'].map((m, i) => html`<div class="legend-item"><i style="background:${PIE_COLORS[i]}"></i>${m}</div>`)}
        </div>
      </div>
      <div class="pbtn values">Values</div>
    </div>`;
  }

  render() {
    return html`
      ${this.renderTitle()}
      ${this.renderTabs()}
      <div class="ribbon">
        ${this.renderClipboard()}
        ${this.renderFont()}
        ${this.renderAlignment()}
        ${this.renderNumber()}
        ${this.renderStyles()}
        ${this.renderCells()}
        ${this.renderEditing()}
        ${this.renderPdf()}
        <div class="g-collapse">${ICONS.chevUp}</div>
      </div>
      ${this.renderFormulaBar()}
      <div class="workspace">
        <div class="sheet">
          ${this.renderGrid()}
          ${this.renderChart()}
          <div class="selection"><i></i></div>
          <div class="watermark">
            <div class="wm-ar">نفذلي</div>
            <div class="wm-en">nafezly.com</div>
          </div>
        </div>
        <div class="vscroll">
          <div class="sb-up"><i></i></div>
          <div class="sb-thumb"></div>
        </div>
      </div>
    `;
  }
}
